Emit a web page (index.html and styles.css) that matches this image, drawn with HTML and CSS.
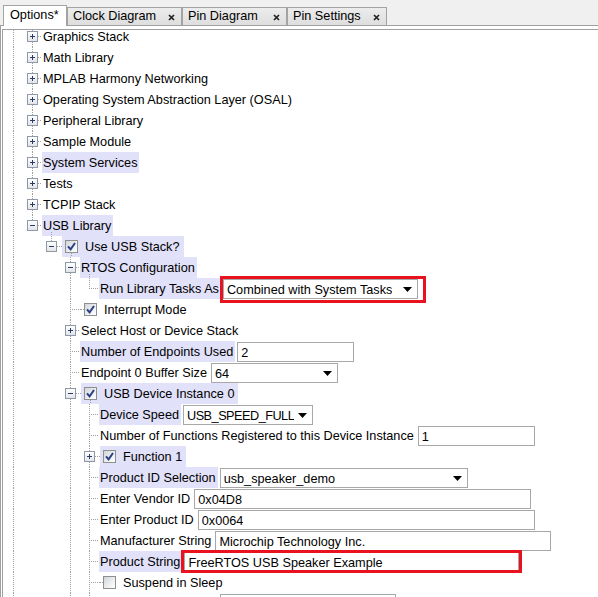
FILE: index.html
```html
<!DOCTYPE html>
<html>
<head>
<meta charset="utf-8">
<title>Options</title>
<link rel="stylesheet" href="styles.css">
</head>
<body>
<div class="tabbar">
  <div class="tab active w64">Options*</div>
  <div class="tab w115">Clock Diagram<svg class="x" viewBox="0 0 7 7"><path d="M1 1l5 5M6 1l-5 5"/></svg></div>
  <div class="tab w105">Pin Diagram<svg class="x" viewBox="0 0 7 7"><path d="M1 1l5 5M6 1l-5 5"/></svg></div>
  <div class="tab w100">Pin Settings<svg class="x" viewBox="0 0 7 7"><path d="M1 1l5 5M6 1l-5 5"/></svg></div>
</div>
<div class="panel">
  <div class="tree">
    <div class="rows">
      <div class="row"><span class="g v"></span><span class="g t"><span class="hd"><svg viewBox="0 0 9 9"><path d="M2 4.5h5M4.5 2v5"/></svg></span></span><span class="lb">Graphics Stack</span></div>
      <div class="row"><span class="g v"></span><span class="g t"><span class="hd"><svg viewBox="0 0 9 9"><path d="M2 4.5h5M4.5 2v5"/></svg></span></span><span class="lb">Math Library</span></div>
      <div class="row"><span class="g v"></span><span class="g t"><span class="hd"><svg viewBox="0 0 9 9"><path d="M2 4.5h5M4.5 2v5"/></svg></span></span><span class="lb">MPLAB Harmony Networking</span></div>
      <div class="row"><span class="g v"></span><span class="g t"><span class="hd"><svg viewBox="0 0 9 9"><path d="M2 4.5h5M4.5 2v5"/></svg></span></span><span class="lb">Operating System Abstraction Layer (OSAL)</span></div>
      <div class="row"><span class="g v"></span><span class="g t"><span class="hd"><svg viewBox="0 0 9 9"><path d="M2 4.5h5M4.5 2v5"/></svg></span></span><span class="lb">Peripheral Library</span></div>
      <div class="row"><span class="g v"></span><span class="g t"><span class="hd"><svg viewBox="0 0 9 9"><path d="M2 4.5h5M4.5 2v5"/></svg></span></span><span class="lb">Sample Module</span></div>
      <div class="row"><span class="g v"></span><span class="g t"><span class="hd"><svg viewBox="0 0 9 9"><path d="M2 4.5h5M4.5 2v5"/></svg></span></span><span class="lb hl">System Services</span></div>
      <div class="row"><span class="g v"></span><span class="g t"><span class="hd"><svg viewBox="0 0 9 9"><path d="M2 4.5h5M4.5 2v5"/></svg></span></span><span class="lb">Tests</span></div>
      <div class="row"><span class="g v"></span><span class="g t"><span class="hd"><svg viewBox="0 0 9 9"><path d="M2 4.5h5M4.5 2v5"/></svg></span></span><span class="lb">TCPIP Stack</span></div>
      <div class="row"><span class="g v"></span><span class="g l"><span class="hd"><svg viewBox="0 0 9 9"><path d="M2 4.5h5"/></svg></span></span><span class="lb hl dnl">USB Library</span></div>
      <div class="row"><span class="g v"></span><span class="g"></span><span class="g l"><span class="hd"><svg viewBox="0 0 9 9"><path d="M2 4.5h5"/></svg></span></span><span class="cn"></span><span class="ck hl dn"><span class="cb"><svg viewBox="0 0 11 11"><path d="M2 5.3l2.6 3.1 4.4-6.4"/></svg></span>Use USB Stack?</span></div>
      <div class="row"><span class="g v"></span><span class="g"></span><span class="g"></span><span class="g t"><span class="hd"><svg viewBox="0 0 9 9"><path d="M2 4.5h5"/></svg></span></span><span class="lb hl dnl">RTOS Configuration</span></div>
      <div class="row"><span class="g v"></span><span class="g"></span><span class="g"></span><span class="g v"></span><span class="g l"></span><span class="lb hl">Run Library Tasks As</span><span class="in combo mark w195"><span class="val">Combined with System Tasks</span><svg class="arr" viewBox="0 0 9 5"><path d="M0 0h9L4.5 5z"/></svg></span></div>
      <div class="row"><span class="g v"></span><span class="g"></span><span class="g"></span><span class="g t"></span><span class="cn"></span><span class="ck"><span class="cb"><svg viewBox="0 0 11 11"><path d="M2 5.3l2.6 3.1 4.4-6.4"/></svg></span>Interrupt Mode</span></div>
      <div class="row"><span class="g v"></span><span class="g"></span><span class="g"></span><span class="g t"><span class="hd"><svg viewBox="0 0 9 9"><path d="M2 4.5h5M4.5 2v5"/></svg></span></span><span class="lb">Select Host or Device Stack</span></div>
      <div class="row"><span class="g v"></span><span class="g"></span><span class="g"></span><span class="g t"></span><span class="lb hl">Number of Endpoints Used</span><span class="in w117"><span class="val">2</span></span></div>
      <div class="row"><span class="g v"></span><span class="g"></span><span class="g"></span><span class="g t"></span><span class="lb">Endpoint 0 Buffer Size</span><span class="in combo w127"><span class="val">64</span><svg class="arr" viewBox="0 0 9 5"><path d="M0 0h9L4.5 5z"/></svg></span></div>
      <div class="row"><span class="g v"></span><span class="g"></span><span class="g"></span><span class="g t"><span class="hd"><svg viewBox="0 0 9 9"><path d="M2 4.5h5"/></svg></span></span><span class="cn"></span><span class="ck hl dn"><span class="cb"><svg viewBox="0 0 11 11"><path d="M2 5.3l2.6 3.1 4.4-6.4"/></svg></span>USB Device Instance 0</span></div>
      <div class="row"><span class="g v"></span><span class="g"></span><span class="g"></span><span class="g v"></span><span class="g t"></span><span class="lb hl">Device Speed</span><span class="in combo w130"><span class="val tight">USB_SPEED_FULL</span><svg class="arr" viewBox="0 0 9 5"><path d="M0 0h9L4.5 5z"/></svg></span></div>
      <div class="row"><span class="g v"></span><span class="g"></span><span class="g"></span><span class="g v"></span><span class="g t"></span><span class="lb">Number of Functions Registered to this Device Instance</span><span class="in w117"><span class="val">1</span></span></div>
      <div class="row"><span class="g v"></span><span class="g"></span><span class="g"></span><span class="g v"></span><span class="g t"><span class="hd"><svg viewBox="0 0 9 9"><path d="M2 4.5h5M4.5 2v5"/></svg></span></span><span class="cn"></span><span class="ck hl"><span class="cb"><svg viewBox="0 0 11 11"><path d="M2 5.3l2.6 3.1 4.4-6.4"/></svg></span>Function 1</span></div>
      <div class="row"><span class="g v"></span><span class="g"></span><span class="g"></span><span class="g v"></span><span class="g t"></span><span class="lb hl">Product ID Selection</span><span class="in combo w248"><span class="val">usb_speaker_demo</span><svg class="arr" viewBox="0 0 9 5"><path d="M0 0h9L4.5 5z"/></svg></span></div>
      <div class="row"><span class="g v"></span><span class="g"></span><span class="g"></span><span class="g v"></span><span class="g t"></span><span class="lb">Enter Vendor ID</span><span class="in w337"><span class="val">0x04D8</span></span></div>
      <div class="row"><span class="g v"></span><span class="g"></span><span class="g"></span><span class="g v"></span><span class="g t"></span><span class="lb">Enter Product ID</span><span class="in w337"><span class="val">0x0064</span></span></div>
      <div class="row"><span class="g v"></span><span class="g"></span><span class="g"></span><span class="g v"></span><span class="g t"></span><span class="lb">Manufacturer String</span><span class="in w336"><span class="val">Microchip Technology Inc.</span></span></div>
      <div class="row"><span class="g v"></span><span class="g"></span><span class="g"></span><span class="g v"></span><span class="g t"></span><span class="lb hl">Product String</span><span class="in mark2 w335"><span class="val">FreeRTOS USB Speaker Example</span></span></div>
      <div class="row"><span class="g v"></span><span class="g"></span><span class="g"></span><span class="g v"></span><span class="g t"></span><span class="cn"></span><span class="ck"><span class="cb off"></span>Suspend in Sleep</span></div>
      <div class="row"><span class="g v"></span><span class="g"></span><span class="g"></span><span class="g v"></span><span class="g t"></span><span class="lb blank"></span><span class="in w176"></span></div>
    </div>
  </div>
</div>
</body>
</html>
```
FILE: styles.css
```css
html, body {
  margin: 0;
  padding: 0;
}
body {
  width: 598px;
  height: 597px;
  overflow: hidden;
  background: #ffffff;
  font-family: "Liberation Sans", Arial, sans-serif;
  font-size: 12.7px;
  color: #000;
}

/* ---------- tabs ---------- */
.tabbar {
  display: flex;
  align-items: flex-end;
  height: 25px;
  padding-left: 3px;
  background: #f0f0f0;
  border-bottom: 1px solid #a0a0a0;
}
.tab {
  box-sizing: border-box;
  height: 18px;
  display: flex;
  align-items: center;
  justify-content: space-between;
  padding: 0 6px 0 5px;
  line-height: 17px;
  border: 1px solid #a3a3a3;
  border-bottom: none;
  background: linear-gradient(#ececec, #dedede);
  white-space: nowrap;
}
.tab.active {
  height: 21px;
  margin-bottom: -1px;
  background: #ffffff;
  padding: 0 0 2px 6px;
  justify-content: flex-start;
}
.w64 { width: 64px; }
.w115 { width: 115px; }
.w105 { width: 105px; }
.w100 { width: 100px; }
.tab .x {
  width: 7px;
  height: 7px;
  stroke: #222;
  stroke-width: 1.7;
  fill: none;
  margin-top: 1px;
}

/* ---------- panel / tree ---------- */
.panel {
  border-left: 1px solid #a0a0a0;
  padding: 3px 0 0 1px;
}
.tree {
  border-top: 1px solid #a0a0a0;
  border-left: 1px solid #a0a0a0;
  height: 580px;
  overflow: hidden;
}
.rows {
  margin-top: -4px;
  padding-left: 1px;
}
.row {
  display: flex;
  align-items: flex-start;
  height: 21px;
  white-space: nowrap;
}

/* guide cells with dotted tree lines */
.g {
  flex: none;
  width: 19px;
  height: 21px;
  display: flex;
  align-items: center;
  justify-content: center;
}
.g.v {
  background: repeating-linear-gradient(to bottom, #a0a0a0 0 1px, transparent 1px 2px) 9px 0 / 1px 21px no-repeat;
}
.g.t {
  background:
    repeating-linear-gradient(to bottom, #a0a0a0 0 1px, transparent 1px 2px) 9px 0 / 1px 21px no-repeat,
    repeating-linear-gradient(to right, #a0a0a0 0 1px, transparent 1px 2px) 9px 10px / 10px 1px no-repeat;
}
.g.l {
  background:
    repeating-linear-gradient(to bottom, #a0a0a0 0 1px, transparent 1px 2px) 9px 0 / 1px 11px no-repeat,
    repeating-linear-gradient(to right, #a0a0a0 0 1px, transparent 1px 2px) 9px 10px / 10px 1px no-repeat;
}

/* expand handle */
.hd {
  box-sizing: border-box;
  width: 11px;
  height: 11px;
  border: 1px solid #8e99a7;
  background: linear-gradient(#ffffff, #e2e4e8);
  display: flex;
}
.hd svg {
  width: 9px;
  height: 9px;
  stroke: #2c3a64;
  stroke-width: 1;
  fill: none;
}

/* connector before checkbox */
.cn {
  flex: none;
  width: 1px;
  height: 21px;
  background-image: linear-gradient(#a0a0a0, #a0a0a0);
  background-position: 0 10px;
  background-size: 1px 1px;
  background-repeat: no-repeat;
}

/* labels */
.lb {
  box-sizing: border-box;
  height: 21px;
  line-height: 21px;
  padding: 1px 2px 0 1px;
  overflow: hidden;
}
.hl {
  background-color: #e1e1fa;
}
.lb.dnl {
  background-image: repeating-linear-gradient(to bottom, #a0a0a0 0 1px, transparent 1px 2px);
  background-position: 9px 17px;
  background-size: 1px 4px;
  background-repeat: no-repeat;
}
.lb.blank {
  width: 119px;
}

/* checkbox rows */
.ck {
  box-sizing: border-box;
  display: flex;
  align-items: center;
  height: 21px;
  line-height: 21px;
  padding: 1px 4px 0 3px;
  background-image: repeating-linear-gradient(to right, #a0a0a0 0 1px, transparent 1px 2px);
  background-position: 0 10px;
  background-size: 3px 1px;
  background-repeat: no-repeat;
}
.ck.hl {
  background-image: none;
}
.ck.dn {
  background-image: repeating-linear-gradient(to bottom, #a0a0a0 0 1px, transparent 1px 2px);
  background-position: 9px 17px;
  background-size: 1px 4px;
  background-repeat: no-repeat;
}
.cb {
  flex: none;
  box-sizing: border-box;
  width: 13px;
  height: 13px;
  margin: -1px 7px 0 0;
  border: 1px solid #8e8f8f;
  background: linear-gradient(135deg, #d2d4d8 0%, #eef0f2 60%, #ffffff 100%);
  display: flex;
  align-items: center;
  justify-content: center;
}
.cb svg {
  width: 11px;
  height: 11px;
  fill: none;
  stroke: #2a3f86;
  stroke-width: 2;
}

/* inputs / combos */
.in {
  position: relative;
  flex: none;
  box-sizing: border-box;
  height: 20px;
  margin: 1px 0 0 2px;
  border: 1px solid #a8a8a8;
  background: #fff;
  display: flex;
  align-items: center;
  justify-content: space-between;
  padding: 1px 5px 0 3px;
  line-height: 18px;
}
.val {
  overflow: hidden;
}
.val.tight {
  letter-spacing: -0.5px;
}
.arr {
  flex: none;
  width: 9px;
  height: 5px;
  fill: #000;
  margin-top: -1px;
}
.w195 { width: 195px; }
.w117 { width: 117px; }
.w127 { width: 127px; }
.w130 { width: 130px; }
.w248 { width: 248px; }
.w337 { width: 337px; }
.w336 { width: 336px; }
.w335 { width: 335px; }
.w176 { width: 176px; }

/* red annotation frames (overlay) */
.mark::after,
.mark2::after {
  content: "";
  position: absolute;
  border: 3px solid #e8131f;
  pointer-events: none;
}
.mark::after {
  left: -4px;
  top: -4px;
  right: -9px;
  bottom: -5px;
}
.mark2::after {
  left: -4px;
  top: -3px;
  right: -4px;
  bottom: -2px;
}
```
